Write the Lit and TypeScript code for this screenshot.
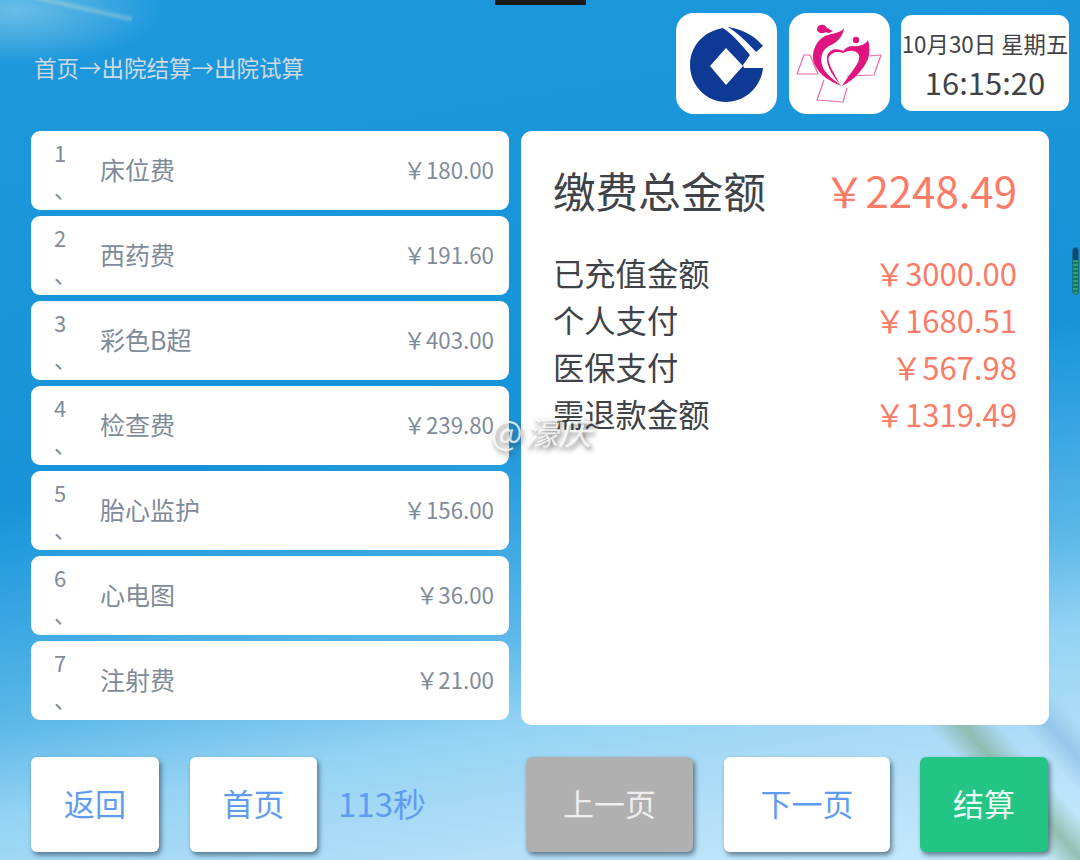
import { LitElement, html, css, svg } from "lit";
import { customElement } from "lit/decorators.js";

const ITEMS = [
  ["1", "床位费", "180.00"],
  ["2", "西药费", "191.60"],
  ["3", "彩色B超", "403.00"],
  ["4", "检查费", "239.80"],
  ["5", "胎心监护", "156.00"],
  ["6", "心电图", "36.00"],
  ["7", "注射费", "21.00"],
];
const ROWS = [
  ["已充值金额", "3000.00"],
  ["个人支付", "1680.51"],
  ["医保支付", "567.98"],
  ["需退款金额", "1319.49"],
];

const ccb = svg`
  <path fill="#0e3a96" d="M87 55 C85 75 68 89 50 89 C30 89 14 72 14 52 C14 33 28 18 47 15 C56 21 66 32 74 42 L67 52 L68 55 Z"/>
  <path fill="#0e3a96" d="M52 14 C66 16 79 23 87 33 L80 39 C72 30 62 20 52 14 Z"/>
  <path fill="#fff" d="M50 35 L67 53 L50 72 L34 53 Z"/>`;

const heart = svg`
  <g fill="none" stroke="#e86aa6" stroke-width="1.2" stroke-linejoin="round">
    <path d="M15 42 L21 42 L29 61 L8 61 Z"/>
    <path d="M80 43 L92 42 L85 62 L58 63"/>
    <path d="M35 67 L28 87 L54 89 L58 75"/>
  </g>
  <g fill="#e0147f">
    <ellipse cx="33" cy="16" rx="5" ry="4.3"/>
    <circle cx="67" cy="27" r="3.2"/>
    <path d="M33 13 C38 14 41 17 44 18 L40 20 C37 19 34 19 32 18 Z"/>
    <path d="M55 15 C52 20 44 20 36 23 C27 28 23 38 24 46 C26 58 38 68 53 73 C44 66 35 60 33 52 C31 44 33 37 40 33 C49 29 54 23 55 15 Z"/>
    <path d="M79 27 C76 32 70 34 63 33 C59 33 56 36 54 38 C49 35 41 35 38 43 C37 50 41 60 51 71 C45 60 39 51 39.5 45 C42 39 49 38 54 40 C60 37 66 37 69.5 41 C72 46 68 52 62 60 C59 64 56 68 53 73 C64 68 75 56 79 46 C81 40 81 33 79 27 Z"/>
  </g>`;

@customElement("app-root")
export class AppRoot extends LitElement {
  static styles = css`
    :host {
      display: block;
      width: 1080px;
      height: 860px;
      overflow: hidden;
      position: relative;
      font-family: "Noto Sans CJK SC", "Noto Sans", sans-serif;
      background:
        linear-gradient(48.6deg, transparent 125px, rgba(135, 180, 160, 0.8) 151px, transparent 178px) right bottom / 200px 260px no-repeat,
        linear-gradient(48.6deg, transparent 195px, rgba(140, 190, 230, 0.75) 216px, transparent 240px) right bottom / 200px 260px no-repeat,
        linear-gradient(12.7deg, transparent 45px, rgba(225, 238, 205, 0.28) 49px, transparent 54px) left top / 132px 40px no-repeat,
        radial-gradient(ellipse 150px 55px at 15px 10px, rgba(170, 220, 240, 0.55), rgba(170, 220, 240, 0) 100%),
        linear-gradient(170deg, #1d98dc 0%, #1793d9 48%, #3ca8e3 60%, #5cb8e8 69%, #95d3f4 78%, #b5e0f8 90%, #c8ebfc 100%);
    }
    .page {
      display: flex;
      flex-direction: column;
      height: 860px;
      box-sizing: border-box;
    }
    .header {
      height: 131px;
      flex: none;
      display: flex;
      align-items: flex-start;
      padding: 13px 11px 0 35px;
      box-sizing: border-box;
    }
    .crumb {
      margin-top: 38px;
      margin-left: -1px;
      font-size: 22.5px;
      line-height: 32px;
      color: #cfd9e2;
      flex: 1;
      white-space: nowrap;
    }
    .tile {
      width: 101px;
      height: 101px;
      background: #fff;
      border-radius: 18px;
      margin-right: 12px;
      flex: none;
    }
    .tile + .tile { margin-right: 11px; }
    .tile svg { display: block; width: 101px; height: 101px; }
    .clock {
      width: 168px;
      height: 96px;
      margin-top: 2px;
      background: #fff;
      border-radius: 11px;
      text-align: center;
      color: #3f4347;
      display: flex;
      flex-direction: column;
      align-items: center;
      white-space: nowrap;
      flex: none;
    }
    .date { font-size: 22.4px; line-height: 30px; margin-top: 13px; }
    .time { font-size: 31px; line-height: 40px; margin-top: 4px; }
    .main {
      display: flex;
      gap: 12px;
      padding-left: 31px;
      height: 594px;
      flex: none;
    }
    .list {
      width: 478px;
      display: flex;
      flex-direction: column;
      gap: 6px;
    }
    .item {
      height: 79px;
      flex: none;
      background: #fff;
      border-radius: 9px;
      display: flex;
      align-items: center;
      padding: 0 15px 4px 23px;
      box-sizing: border-box;
      color: #7f8b99;
      overflow: hidden;
    }
    .num {
      width: 12px;
      font-size: 22px;
      line-height: 36px;
      margin-top: 3px;
      flex: none;
    }
    .num span { display: block; }
    .name { margin-left: 34px; font-size: 25px; flex: 1; white-space: nowrap; }
    .price { font-size: 22.3px; white-space: nowrap; }
    .panel {
      width: 528px;
      background: #fff;
      border-radius: 11px;
      padding: 27px 32px 0 32px;
      box-sizing: border-box;
      color: #3f4347;
    }
    .total, .row { display: flex; justify-content: space-between; white-space: nowrap; }
    .total { font-size: 42.6px; line-height: 64px; margin-bottom: 27px; }
    .total .money { font-size: 42px; }
    .row { font-size: 31.3px; line-height: 47px; }
    .row .money { font-size: 31px; }
    .money { color: #fb7b66; }
    .footer {
      display: flex;
      align-items: flex-start;
      padding: 32px 32px 0 31px;
    }
    .btn {
      height: 95px;
      background: #fff;
      border-radius: 6px;
      box-shadow: 2px 3px 5px rgba(30, 50, 70, 0.6);
      color: #5f9cf0;
      font-size: 31px;
      display: flex;
      align-items: center;
      justify-content: center;
      flex: none;
      white-space: nowrap;
      padding-bottom: 4px;
      box-sizing: border-box;
    }
    .back { width: 128px; }
    .home { width: 127px; margin-left: 31px; }
    .count { margin-left: 21px; font-size: 33px; line-height: 93px; color: #5f9cf0; white-space: nowrap; }
    .right { margin-left: auto; display: flex; gap: 30px; }
    .prev { width: 167px; background: #b0b0b0; color: #eeeeee; }
    .next { width: 166px; margin-left: 1px; }
    .pay { width: 128px; background: #22c583; color: #e9fbf2; }
    .notch { position: absolute; left: 495px; top: 0; width: 91px; height: 5px; background: #1a1a1a; }
    .level {
      position: absolute;
      left: 1072px;
      top: 247px;
      width: 7px;
      height: 48px;
      box-sizing: border-box;
      border: 1px solid #1f6a90;
      border-radius: 4px;
      background:
        linear-gradient(#0f4a72 0 26%, transparent 26%),
        repeating-linear-gradient(#27a862 0 2px, #167a52 2px 4px);
    }
    .mark {
      position: absolute;
      left: 491px;
      top: 409px;
      font-size: 33.5px;
      line-height: 44px;
      color: rgba(255, 255, 255, 0.8);
      text-shadow: 2px 3px 5px rgba(60, 60, 60, 0.7);
      white-space: nowrap;
    }
    .mark i { font-style: italic; margin-left: 2px; }
  `;

  render() {
    return html`
      <div class="page">
        <div class="header">
          <div class="crumb">首页→出院结算→出院试算</div>
          <div class="tile"><svg viewBox="0 0 101 101">${ccb}</svg></div>
          <div class="tile"><svg viewBox="0 0 101 101">${heart}</svg></div>
          <div class="clock">
            <div class="date">10月30日 星期五</div>
            <div class="time">16:15:20</div>
          </div>
        </div>
        <div class="main">
          <div class="list">
            ${ITEMS.map(
              ([n, name, p]) => html`
                <div class="item">
                  <div class="num"><span>${n}</span><span>、</span></div>
                  <div class="name">${name}</div>
                  <div class="price">￥${p}</div>
                </div>
              `
            )}
          </div>
          <div class="panel">
            <div class="total"><span>缴费总金额</span><span class="money">￥2248.49</span></div>
            ${ROWS.map(
              ([k, v]) => html`<div class="row"><span>${k}</span><span class="money">￥${v}</span></div>`
            )}
          </div>
        </div>
        <div class="footer">
          <div class="btn back">返回</div>
          <div class="btn home">首页</div>
          <div class="count">113秒</div>
          <div class="right">
            <div class="btn prev">上一页</div>
            <div class="btn next">下一页</div>
            <div class="btn pay">结算</div>
          </div>
        </div>
      </div>
      <div class="notch"></div>
      <div class="level"></div>
      <div class="mark">@<i>濠庆</i></div>
    `;
  }
}
